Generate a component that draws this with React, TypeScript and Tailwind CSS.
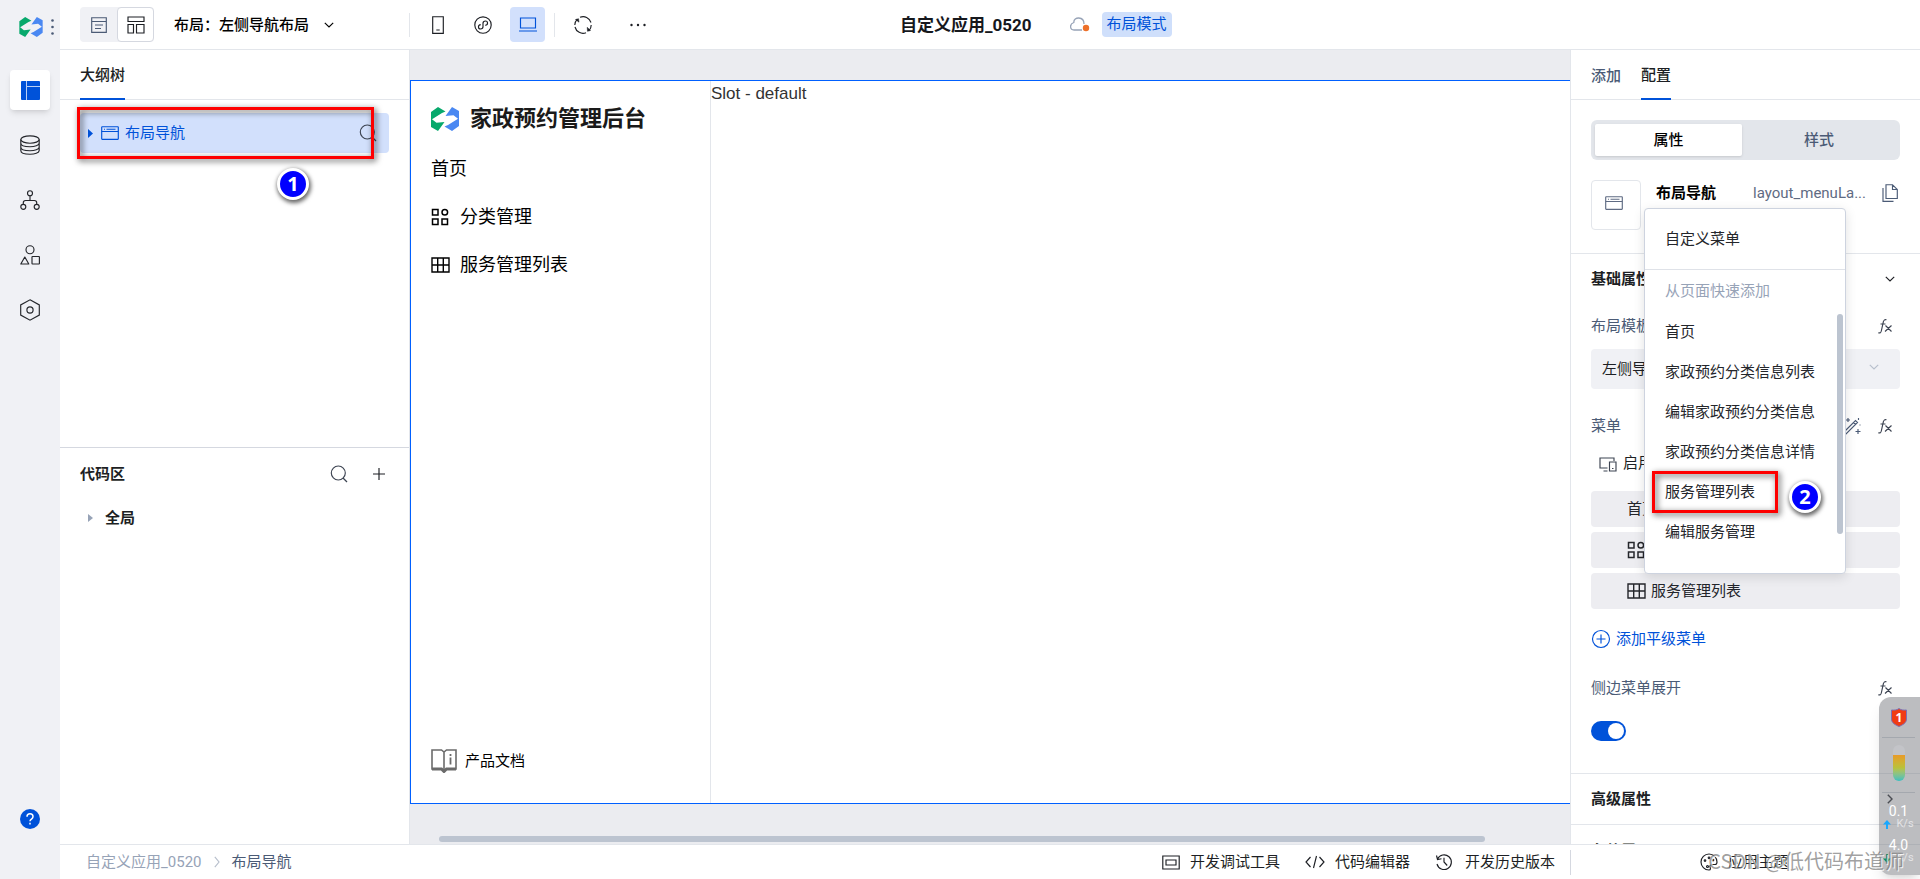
import { useState } from 'react';
import type { ReactNode } from 'react';

interface IconProps {
  className?: string;
}

interface SvgProps extends IconProps {
  box: string;
  children: ReactNode;
}

const Svg = ({ box, className, children }: SvgProps) => (
  <svg
    viewBox={box}
    className={`shrink-0 ${className ?? ''}`}
    fill="none"
    stroke="currentColor"
    strokeWidth="1.15"
    aria-hidden="true"
  >
    {children}
  </svg>
);

const Logo = ({ className }: IconProps) => (
  <svg viewBox="0 0 28 24" className={`shrink-0 ${className ?? ''}`} aria-hidden="true">
    <path fill="#07a96c" d="M7 0l7.500 4.500L11 6 1 12.300 5.500 15.800l8-.8L7 24l-7-4V5z" />
    <path fill="#4a88f2" d="M21 24l-7.500-4.500L17 18l10-6.300-4.500-3.500-8 .8L21 0l7 4v15z" />
  </svg>
);

const PageIcon = () => (
  <Svg box="0 0 16 16" className="w-4 h-4">
    <path d="M.7.7h14.6v14.6H.7zM.7 4.5h14.6M4 8h8M4 11.5h6" />
  </Svg>
);

const LayoutIcon = () => (
  <Svg box="0 0 18 18" className="w-[18px] h-[18px]">
    <path d="M1 1h16v4.5H1zM1 8.5h5.5V17H1zM9.5 8.5H17V17H9.5z" />
  </Svg>
);

const SearchIcon = ({ className }: IconProps) => (
  <Svg box="0 0 18 18" className={`w-[18px] h-[18px] ${className ?? ''}`}>
    <circle cx="8.3" cy="8" r="7" />
    <path d="M13 13l4 4" />
  </Svg>
);

const WindowIcon = () => (
  <Svg box="0 0 18 14" className="w-[18px] h-[14px]">
    <rect x=".7" y=".7" width="16.6" height="12.6" rx=".5" />
    <path d="M.7 5.5h16.6M3 3.2h1M5.5 3.2h9" />
  </Svg>
);

const ChevronDown = ({ className }: IconProps) => (
  <Svg box="0 0 10 6" className={`w-[10px] h-[6px] ${className ?? ''}`}>
    <path d="M.8.8L5 5 9.2.8" />
  </Svg>
);

const GridIcon = ({ className }: IconProps) => (
  <Svg box="0 0 18 18" className={`w-[18px] h-[18px] ${className ?? ''}`}>
    <path d="M1.5 1.5h5.5v5.5H1.5zM1.5 11h5.5v5.5H1.5zM11 11h5.5v5.5H11z" strokeWidth="1.5" />
    <circle cx="13.8" cy="4.2" r="2.8" strokeWidth="1.5" />
  </Svg>
);

const TableIcon = ({ className }: IconProps) => (
  <Svg box="0 0 19 16" className={`w-[19px] h-4 ${className ?? ''}`}>
    <path d="M1 1h17v14H1zM1 8h17M6.7 1v14M12.3 1v14" strokeWidth="1.4" />
  </Svg>
);

const FxIcon = () => (
  <Svg box="0 0 14 15" className="w-[14px] h-[15px] text-[#3d4452]">
    <path d="M8.500.8C6.500.3 5.700 1.300 5.300 3L3.300 12c-.4 1.800-1.300 2.300-3 1.700M2.500 5h5M7.500 6.500l6 6M13.500 6.500l-6.500 6" />
  </Svg>
);

const DatabaseIcon = () => (
  <Svg box="0 0 20 20" className="w-5 h-5">
    <ellipse cx="10" cy="4.5" rx="9.2" ry="3.7" />
    <path d="M.8 4.5v11c0 5 18.4 5 18.4 0v-11M.8 8c0 5 18.4 5 18.4 0M.8 12c0 5 18.4 5 18.4 0" />
  </Svg>
);

const FlowIcon = () => (
  <Svg box="0 0 20 20" className="w-5 h-5">
    <circle cx="10" cy="3.2" r="2.5" />
    <circle cx="3.3" cy="16.8" r="2.5" />
    <circle cx="16.7" cy="16.8" r="2.5" />
    <path d="M10 5.7v4.8M3.3 14.3v-1.5c0-1.5.8-2.3 2.3-2.3h8.8c1.5 0 2.3.8 2.3 2.3v1.5" />
  </Svg>
);

const ShapesIcon = () => (
  <Svg box="0 0 20 20" className="w-5 h-5">
    <circle cx="10" cy="4.7" r="4" />
    <path d="M4.8 12l4 7h-8z" strokeLinejoin="round" />
    <rect x="12" y="11.5" width="7.4" height="7.5" rx=".5" />
  </Svg>
);

const HexagonIcon = () => (
  <Svg box="0 0 20 22" className="w-5 h-[22px]">
    <path d="M10 .8l9.3 5.1v10.2L10 21.2.7 16.1V5.9z" />
    <circle cx="10" cy="11" r="3.1" />
  </Svg>
);

const PanelIcon = () => (
  <svg viewBox="0 0 19 19" className="w-[19px] h-[19px]" aria-hidden="true">
    <rect width="19" height="19" rx="1" fill="#0052d9" />
    <path d="M5.500 0v19M5.500 5.500H19" stroke="#b9cff5" fill="none" />
  </svg>
);

const railItems = [
  { label: '数据源', icon: <DatabaseIcon /> },
  { label: '流程', icon: <FlowIcon /> },
  { label: '组件', icon: <ShapesIcon /> },
  { label: '设置', icon: <HexagonIcon /> },
];

const quickPages = [
  '首页',
  '家政预约分类信息列表',
  '编辑家政预约分类信息',
  '家政预约分类信息详情',
  '服务管理列表',
  '编辑服务管理',
];

const StepBadge = ({ step, className }: { step: number; className: string }) => (
  <span
    className={`absolute z-30 flex w-8 h-8 items-center justify-center rounded-full border-3 border-white bg-[#0000ff] text-xl font-bold leading-none text-white font-['Noto_Sans','DejaVu_Sans',sans-serif] shadow-[1px_2px_4px_1px_rgba(0,0,0,0.6)] ${className}`}
  >
    {step}
  </span>
);

const Rail = () => (
  <nav className="flex w-[60px] shrink-0 flex-col items-center bg-[#f0f1f5] text-[#24262b]">
    <div className="flex h-[54px] w-full items-center gap-2 pl-[19px]">
      <Logo className="w-6 h-5" />
      <svg viewBox="0 0 3 16" className="w-[3px] h-4" fill="#4b5b76" aria-hidden="true">
        <circle cx="1.500" cy="1.500" r="1.300" />
        <circle cx="1.500" cy="8" r="1.300" />
        <circle cx="1.500" cy="14.500" r="1.300" />
      </svg>
    </div>
    <div className="mt-4 flex flex-col gap-[15px]">
      <button aria-label="布局" className="flex w-10 h-10 items-center justify-center rounded bg-white shadow-md">
        <PanelIcon />
      </button>
      {railItems.map((item) => (
        <button key={item.label} aria-label={item.label} className="flex w-10 h-10 items-center justify-center">
          {item.icon}
        </button>
      ))}
    </div>
    <button aria-label="帮助" className="mt-auto mb-[50px]">
      <svg viewBox="0 0 20 20" className="w-5 h-5" fill="none" aria-hidden="true">
        <circle cx="10" cy="10" r="10" fill="#0052d9" />
        <path d="M7 7.800c0-4 6-4 6 0 0 2.200-3 2.300-3 4.400M10 13.800v1.700" stroke="white" strokeWidth="1.500" />
      </svg>
    </button>
  </nav>
);

const Header = () => (
  <header className="flex h-[50px] shrink-0 items-center border-b border-[#e3e6eb] text-[#1d1f24]">
    <div className="flex w-[840px] shrink-0 items-center pl-5">
      <div className="flex w-[329px] shrink-0 items-center">
        <div className="flex rounded bg-[#f0f1f5]">
          <button aria-label="页面" className="flex w-[37px] h-[35px] items-center justify-center text-[#4b5b76]">
            <PageIcon />
          </button>
          <button
            aria-label="布局"
            className="flex w-[37px] h-[35px] items-center justify-center rounded border border-[#d5d8e0] bg-white"
          >
            <LayoutIcon />
          </button>
        </div>
        <button className="ml-5 flex items-center gap-[15px] font-medium text-black">
          布局：左侧导航布局
          <ChevronDown />
        </button>
      </div>
      <div className="flex items-center border-l border-[#e3e6eb] pl-[10px] h-6">
        <button aria-label="手机" className="flex w-[35px] h-[35px] items-center justify-center">
          <Svg box="0 0 12 18" className="w-3 h-[18px]">
            <path d="M.7.7h10.600v16.600H.7zM4.300 14h3.400" />
          </Svg>
        </button>
        <button aria-label="小程序" className="ml-[10px] flex w-[35px] h-[35px] items-center justify-center">
          <Svg box="0 0 18 18" className="w-[18px] h-[18px]">
            <circle cx="9" cy="9" r="8.200" />
            <path d="M6.700 8.600C3.500 9 4 13 6.500 13 8 13 9 12 9 10.800V7.200C9 6 10 5 11.500 5c2.500 0 3 4-.2 4.400" />
          </Svg>
        </button>
        <button
          aria-label="电脑"
          className="ml-[10px] flex w-[35px] h-[35px] items-center justify-center rounded bg-[#d2e0fc] text-[#0052d9]"
        >
          <Svg box="0 0 18 15" className="w-[18px] h-[15px]">
            <path d="M1.500 1h15v10h-15zM0 14h18" />
          </Svg>
        </button>
      </div>
      <div className="ml-[9px] flex h-6 items-center border-l border-[#e3e6eb] pl-[10px]">
        <button aria-label="刷新" className="flex w-[35px] h-[35px] items-center justify-center">
          <Svg box="0 0 18 18" className="w-[18px] h-[18px]">
            <path d="M6 1.300a8.200 8.200 0 0111 5.200M17.200 9a8.200 8.200 0 01-2 5.300M12 16.700A8.200 8.200 0 011 11M.8 9a8.200 8.200 0 012.300-5.700" />
            <path d="M1.500 3.500l3-.8.5 3.500zM16.500 14.500l-3 .8-.300-4z" fill="currentColor" strokeWidth=".5" />
          </Svg>
        </button>
        <button aria-label="更多" className="ml-5 flex w-[35px] h-[35px] items-center justify-center">
          <svg viewBox="0 0 16 4" className="w-4 h-1" fill="currentColor" aria-hidden="true">
            <circle cx="1.500" cy="2" r="1.200" />
            <circle cx="8" cy="2" r="1.200" />
            <circle cx="14.500" cy="2" r="1.200" />
          </svg>
        </button>
      </div>
    </div>
    <h1 className="text-[17px] font-bold text-[#16181d]">自定义应用_0520</h1>
    <Svg box="0 0 20 15" className="ml-[38px] w-5 h-[15px] text-[#97a3b7]">
      <path d="M14 7c0-8-10.500-7.500-10.200-1.500C-.8 7-.2 13 4 13h8" strokeWidth="1.300" />
      <circle cx="16" cy="11" r="3.200" fill="#ed7029" stroke="none" />
    </Svg>
    <span className="ml-3 rounded bg-[#cfdffb] px-[5px] leading-[25px] text-[#0052d9]">布局模式</span>
  </header>
);

const OutlinePanel = () => (
  <aside className="flex w-[350px] shrink-0 flex-col border-r border-[#e3e6eb]">
    <section className="relative h-[397px] shrink-0">
      <div className="flex h-[50px] border-b border-[#e3e6eb] pl-5">
        <h2 className="flex items-center border-b-2 border-[#0052d9] pt-[2px] font-medium text-[#1d1f24] -mb-px">大纲树</h2>
      </div>
      <button className="mt-[13px] ml-5 flex w-[309px] h-10 items-center rounded bg-[#d2e0fc] pl-2 pr-3 text-[#0052d9]">
        <svg viewBox="0 0 5 9" className="w-[5px] h-[9px]" fill="currentColor" aria-hidden="true">
          <path d="M0 0l5 4.500L0 9z" />
        </svg>
        <span className="ml-2 flex items-center gap-[6px]">
          <WindowIcon />
          布局导航
        </span>
        <SearchIcon className="ml-auto text-[#3d4452]" />
      </button>
      <div className="absolute top-[57px] left-[17px] z-20 w-[297px] h-[52px] border-3 border-[#fe0000] drop-shadow-[2px_2px_3px_rgba(0,0,0,0.7)]" />
      <StepBadge step={1} className="top-[118px] left-[217px]" />
    </section>
    <section className="border-t border-[#d5d8e0] px-5 text-[#1d1f24]">
      <div className="flex h-[52px] items-center">
        <h2 className="font-bold">代码区</h2>
        <button aria-label="搜索代码" className="ml-auto mr-[25px]">
          <SearchIcon className="text-[#3d4452]" />
        </button>
        <button aria-label="新增代码" className="mr-1">
          <Svg box="0 0 12 12" className="w-3 h-3">
            <path d="M6 0v12M0 6h12" />
          </Svg>
        </button>
      </div>
      <button className="flex h-9 items-center gap-3 pl-2 font-bold">
        <svg viewBox="0 0 5 8" className="w-[5px] h-2" fill="#97a3b7" aria-hidden="true">
          <path d="M0 0l5 4-5 4z" />
        </svg>
        全局
      </button>
    </section>
  </aside>
);

const Canvas = () => (
  <main className="flex min-w-0 flex-1 flex-col bg-[#ebecf0] pt-[30px]">
    <div className="flex flex-1 border-y border-l border-[#0060ff] bg-white text-black">
      <nav className="flex w-[300px] shrink-0 flex-col border-r border-[#e3e6eb] pl-5 text-lg leading-[48px]">
        <div className="flex h-[76px] items-center gap-[11px]">
          <Logo className="w-7 h-6" />
          <span className="text-[22px] font-bold text-[#1a1a1a]">家政预约管理后台</span>
        </div>
        <a href="#home" className="-mt-3">首页</a>
        <a href="#category" className="flex items-center gap-[11px]">
          <GridIcon />
          分类管理
        </a>
        <a href="#service" className="flex items-center gap-[10px]">
          <TableIcon />
          服务管理列表
        </a>
        <a href="#docs" className="mt-auto mb-[18px] flex items-center gap-2 text-[15px]">
          <Svg box="0 0 26 24" className="w-[26px] h-6 text-[#6b6b6b]">
            <path d="M1 1h9.500L13 3l2.500-2H25v19h-9.500L13 22l-2.500-2H1zM13 3v17" strokeWidth="1.600" />
            <path d="M1 20h9.500l2.500 2.500 2.500-2.500H25" strokeWidth="3" />
            <path d="M19.500 8.500v7M19.500 5v2" strokeWidth="1.800" />
          </Svg>
          产品文档
        </a>
      </nav>
      <p className="font-['Liberation_Sans',Arial,sans-serif] text-[17px] leading-[26px] text-[#333]">Slot - default</p>
    </div>
    <div className="flex h-10 shrink-0 items-end pb-[2px] pl-[29px]">
      <div className="h-[6px] w-[92.500%] rounded-full bg-[#bcc4d0]" />
    </div>
  </main>
);

const AddMenu = () => (
  <div
    role="menu"
    className="absolute top-[158px] left-[73px] z-10 flex w-[202px] h-[366px] flex-col rounded border border-[#cdd3df] bg-white text-[#24262b] shadow-[0_3px_12px_rgba(0,0,0,0.12)]"
  >
    <button role="menuitem" className="h-[61px] shrink-0 border-b border-[#dfe2e8] pl-5 text-left">
      自定义菜单
    </button>
    <div className="flex min-h-0 flex-1">
      <div className="flex flex-1 flex-col pl-5">
        <span className="flex h-[42px] items-center text-[#97a3b7]">从页面快速添加</span>
        {quickPages.map((page) => (
          <button key={page} role="menuitem" className="h-10 text-left">
            {page}
          </button>
        ))}
      </div>
      <div className="mt-11 mr-[2px] w-[6px] h-[220px] rounded-full bg-[#bcc4d0]" />
    </div>
    <div className="absolute top-[262px] left-[7px] w-[126px] h-[42px] border-3 border-[#fe0000] drop-shadow-[2px_2px_3px_rgba(0,0,0,0.7)]" />
    <StepBadge step={2} className="top-[272px] left-36" />
  </div>
);

const ConfigPanel = () => {
  const [expanded, setExpanded] = useState(true);

  return (
    <aside className="relative flex w-[350px] shrink-0 flex-col border-l border-[#e3e6eb] text-[#1d1f24]">
      <div className="flex h-[50px] shrink-0 gap-5 border-b border-[#e3e6eb] pl-5 font-medium">
        <button className="pt-[2px] text-[#4b5b76]">添加</button>
        <button className="-mb-px border-b-2 border-[#0052d9] pt-[2px]">配置</button>
      </div>
      <div className="min-h-0 flex-1 overflow-hidden">
        <section className="h-[154px] border-b border-[#e3e6eb] px-5 pt-5">
          <div className="grid h-10 grid-cols-[147px_1fr] rounded-md bg-[#e3e6eb] p-1 font-medium">
            <button className="rounded-xs bg-white text-black shadow-sm">属性</button>
            <button className="text-[#4b5b76]">样式</button>
          </div>
          <div className="mt-5 flex">
            <div className="flex w-[50px] h-[50px] items-center justify-center rounded border border-[#e3e6eb] pr-1 pb-1 text-[#5f6b83]">
              <WindowIcon />
            </div>
            <div className="ml-[15px] flex flex-1 h-[26px] items-center">
              <h2 className="font-bold text-black">布局导航</h2>
              <span className="ml-auto mr-4 text-[#5f6b83]">layout_menuLa...</span>
              <button aria-label="复制" className="mr-[2px] text-[#4b5b76]">
                <Svg box="0 0 16 18" className="w-4 h-[18px]">
                  <path d="M4 .7h6.500l4.800 4.800v9H4zM10.500.7v4.800h4.800M1 4v13.300h10.500" />
                </Svg>
              </button>
            </div>
          </div>
        </section>
        <section className="border-b border-[#e3e6eb] px-5">
          <button className="flex h-[49px] w-full items-center justify-between pr-[5px] font-bold">
            基础属性
            <ChevronDown />
          </button>
          <div className="flex h-[46px] items-center justify-between pr-2">
            <label htmlFor="layout-template" className="text-[#4b5b76]">布局模板</label>
            <FxIcon />
          </div>
          <div className="relative">
            <select
              id="layout-template"
              className="block h-10 w-full appearance-none rounded bg-[#f0f1f5] pl-[11px]"
            >
              <option>左侧导航布局</option>
            </select>
            <ChevronDown className="pointer-events-none absolute top-[15px] right-[21px] text-[#b7bfcc]" />
          </div>
          <div className="mt-[14px] flex h-[46px] items-center pr-2">
            <span className="mr-auto text-[#4b5b76]">菜单</span>
            <button aria-label="自动生成菜单" className="mr-[17px] text-[#4b5b76]">
              <Svg box="0 0 18 18" className="w-[18px] h-[18px]">
                <path d="M1 15L12.500 3.500l2 2L3 17zM10.500 5.500l2 2M5 1v4M3 3h4M15 12v5M12.500 14.500h5M15.500 1v2M16.500 8h1" />
              </Svg>
            </button>
            <FxIcon />
          </div>
          <div className="flex h-[42px] items-start gap-[6px] pl-2 pt-[2px]">
            <Svg box="0 0 18 15" className="mt-[6px] w-[18px] h-[15px] text-[#3d4452]">
              <path d="M8.500 11H1V1h14v3M4.500 14h4M10.500 5h6.500v9h-6.500zM13 11.500h1.500" />
            </Svg>
            启用自定义
          </div>
          <ul className="flex flex-col gap-[5px] text-[#24262b]">
            <li className="flex h-9 items-center rounded bg-[#ededf1] pl-9">首页</li>
            <li className="flex h-9 items-center gap-[6px] rounded bg-[#ededf1] pl-9">
              <GridIcon />
              分类管理
            </li>
            <li className="flex h-9 items-center gap-[5px] rounded bg-[#ededf1] pl-9">
              <TableIcon />
              服务管理列表
            </li>
          </ul>
          <button className="mt-[18px] flex h-6 items-center gap-[5px] text-[#0052d9]">
            <Svg box="0 0 20 20" className="w-5 h-5">
              <circle cx="10" cy="10" r="8.500" />
              <path d="M10 5.500v9M5.500 10h9" />
            </Svg>
            添加平级菜单
          </button>
          <div className="mt-[14px] flex h-[46px] items-center justify-between pr-2">
            <label htmlFor="menu-expanded" className="text-[#4b5b76]">侧边菜单展开</label>
            <FxIcon />
          </div>
          <input
            id="menu-expanded"
            type="checkbox"
            role="switch"
            checked={expanded}
            onChange={(e) => setExpanded(e.target.checked)}
            className="mt-[10px] mb-8 block w-[35px] h-5 appearance-none rounded-full bg-[#bcc4d0] p-[2px] before:block before:w-4 before:h-4 before:rounded-full before:bg-white checked:bg-[#0052d9] checked:before:ml-[15px]"
          />
        </section>
        <button className="flex h-[51px] w-full items-center justify-between border-b border-[#e3e6eb] pl-5 pr-[27px] font-bold">
          高级属性
          <Svg box="0 0 6 10" className="w-[6px] h-[10px]">
            <path d="M.8.8L5 5 .8 9.200" strokeWidth="1.400" />
          </Svg>
        </button>
        <button className="flex h-[51px] w-full items-center pl-5 font-bold">条件展示</button>
      </div>
      <AddMenu />
    </aside>
  );
};

const Footer = () => (
  <footer className="flex h-[35px] shrink-0 items-center border-t border-[#e3e6eb] pl-[26px] text-[#1d1f24]">
    <span className="text-[#97a3b7]">自定义应用_0520</span>
    <Svg box="0 0 6 12" className="mx-3 w-[6px] h-3 text-[#b7bfcc]">
      <path d="M.8.800L5 6 .8 11.200" />
    </Svg>
    <span className="text-[#4b5b76]">布局导航</span>
    <div className="ml-auto flex items-center gap-[25px] pr-[15px]">
      <button className="flex items-center gap-[10px]">
        <Svg box="0 0 18 15" className="w-[18px] h-[15px]">
          <path d="M.8 1h16.400v13H.8zM4 5h10v5H4z" />
        </Svg>
        开发调试工具
      </button>
      <button className="flex items-center gap-[10px]">
        <Svg box="0 0 20 14" className="w-5 h-[14px]">
          <path d="M5.500 2L1 7l4.500 5M14.500 2L19 7l-4.500 5M11.500 1l-3 12" />
        </Svg>
        代码编辑器
      </button>
      <button className="flex items-center gap-3">
        <Svg box="0 0 18 18" className="w-[18px] h-[18px]">
          <path d="M2.500 6A7.300 7.300 0 112 11M1.500 2.500L2.500 6.500l4-.8M9 4.800V9l3.200 3.500" />
        </Svg>
        开发历史版本
      </button>
    </div>
    <div className="flex h-[25px] w-[350px] items-center border-l border-[#d5d8e0] pl-[129px]">
      <button className="flex items-center gap-[10px]">
        <Svg box="0 0 18 18" className="w-[18px] h-[18px]">
          <path d="M9 1a8 8 0 100 16c2 0 1.500-2 1-3s.5-2.500 2.500-2.500H15c1.500 0 2-1.300 2-2.500a8 8 0 00-8-8z" />
          <circle cx="5" cy="7.500" r=".8" />
          <circle cx="9" cy="4.800" r=".8" />
          <circle cx="13" cy="7" r=".8" />
          <circle cx="7.500" cy="13.500" r="1" />
        </Svg>
        应用主题
      </button>
    </div>
  </footer>
);

const NetMonitor = () => (
  <div className="absolute right-0 bottom-1 z-20 flex w-[41px] h-[178px] flex-col items-center rounded-l-xl bg-[#7a7b82]/50 pr-[2px] shadow-lg text-white">
    <svg viewBox="0 0 16 19" className="mt-[11px] w-4 h-[19px] shrink-0" aria-hidden="true">
      <path d="M8 .5c2 1.500 4.500 1.800 7.500 1.500v9c0 4-4 6-7.500 7.500C4.500 17 .5 15 .5 11V2C3.500 2.300 6 2 8 .5z" fill="#f03c14" stroke="#7a72b8" />
      <text x="8" y="13.500" textAnchor="middle" fontSize="12" fontWeight="700" fontFamily="Noto Sans" fill="white">1</text>
    </svg>
    <div className="mt-[10px] h-px w-[33px] shrink-0 bg-[#a4a8ae]" />
    <div className="mt-[7px] flex w-3 h-9 shrink-0 items-end overflow-hidden rounded-full bg-[#c3c4c8]">
      <div className="h-[26px] w-full bg-linear-to-b from-[#e89a28] via-[#b8c23c] to-[#35bfc0]" />
    </div>
    <div className="mt-[11px] h-px w-[33px] shrink-0 bg-[#a4a8ae]" />
    <span className="mt-[10px] text-sm leading-4">0.1</span>
    <span className="flex items-center gap-[5px] text-[11px] leading-[10px] text-[#e4e4e6]">
      <svg viewBox="0 0 8 9" className="w-2 h-[9px]" fill="#19a8ff" aria-hidden="true">
        <path d="M4 0l4 4.500H5V9H3V4.500H0z" />
      </svg>
      K/s
    </span>
    <span className="mt-2 text-sm leading-4">4.0</span>
    <span className="flex items-center gap-[5px] text-[11px] leading-[10px] text-[#e4e4e6]">
      <svg viewBox="0 0 8 9" className="w-2 h-[9px]" fill="#0a9a60" aria-hidden="true">
        <path d="M4 9l4-4.500H5V0H3v4.500H0z" />
      </svg>
      K/s
    </span>
  </div>
);

export default function App() {
  return (
    <div className="relative flex h-screen overflow-hidden bg-white text-[15px] leading-6 font-['Roboto','Noto_Sans_CJK_SC',sans-serif]">
      <Rail />
      <div className="flex min-w-0 flex-1 flex-col">
        <Header />
        <div className="flex min-h-0 flex-1">
          <OutlinePanel />
          <Canvas />
          <ConfigPanel />
        </div>
        <Footer />
      </div>
      <NetMonitor />
      <span className="absolute right-4 bottom-1 z-20 text-xl leading-7 text-[#777]/70 font-['Noto_Sans_CJK_SC',sans-serif] [text-shadow:1px_1px_0_rgba(255,255,255,0.8)]">
        CSDN @低代码布道师
      </span>
    </div>
  );
}
